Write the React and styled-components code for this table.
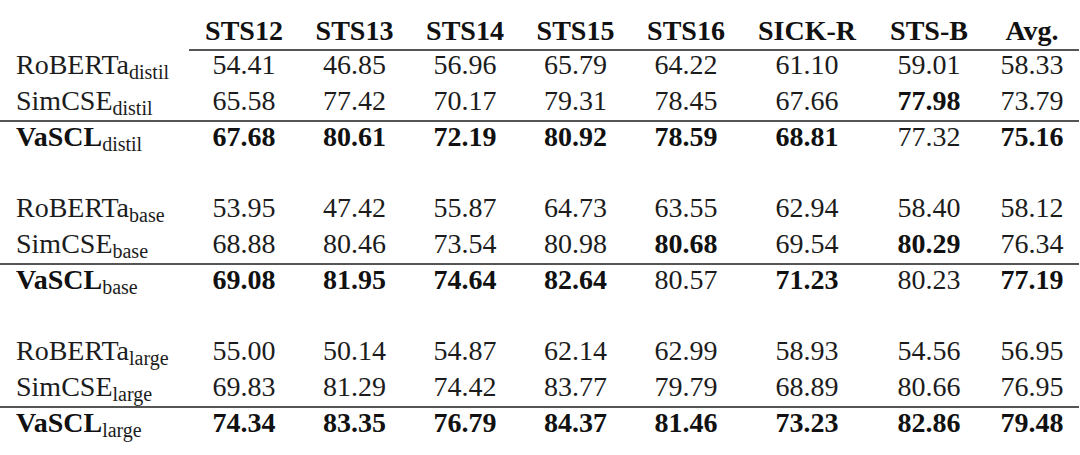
import React from 'react';
import styled, { createGlobalStyle } from 'styled-components';

const GlobalStyle = createGlobalStyle`
  html, body {
    margin: 0;
    padding: 0;
    background: #ffffff;
  }
`;

const columns = ['STS12', 'STS13', 'STS14', 'STS15', 'STS16', 'SICK-R', 'STS-B', 'Avg.'];
const widths = [189, 110, 111, 110, 111, 110, 132, 112, 94];

const groups = [
  {
    size: 'distil',
    rows: [
      { model: 'RoBERTa', values: ['54.41', '46.85', '56.96', '65.79', '64.22', '61.10', '59.01', '58.33'], bold: [] },
      { model: 'SimCSE', values: ['65.58', '77.42', '70.17', '79.31', '78.45', '67.66', '77.98', '73.79'], bold: [6] },
      { model: 'VaSCL', values: ['67.68', '80.61', '72.19', '80.92', '78.59', '68.81', '77.32', '75.16'], bold: [0, 1, 2, 3, 4, 5, 7], ours: true },
    ],
  },
  {
    size: 'base',
    rows: [
      { model: 'RoBERTa', values: ['53.95', '47.42', '55.87', '64.73', '63.55', '62.94', '58.40', '58.12'], bold: [] },
      { model: 'SimCSE', values: ['68.88', '80.46', '73.54', '80.98', '80.68', '69.54', '80.29', '76.34'], bold: [4, 6] },
      { model: 'VaSCL', values: ['69.08', '81.95', '74.64', '82.64', '80.57', '71.23', '80.23', '77.19'], bold: [0, 1, 2, 3, 5, 7], ours: true },
    ],
  },
  {
    size: 'large',
    rows: [
      { model: 'RoBERTa', values: ['55.00', '50.14', '54.87', '62.14', '62.99', '58.93', '54.56', '56.95'], bold: [] },
      { model: 'SimCSE', values: ['69.83', '81.29', '74.42', '83.77', '79.79', '68.89', '80.66', '76.95'], bold: [] },
      { model: 'VaSCL', values: ['74.34', '83.35', '76.79', '84.37', '81.46', '73.23', '82.86', '79.48'], bold: [0, 1, 2, 3, 4, 5, 6, 7], ours: true },
    ],
  },
];

const Table = styled.table`
  margin-top: 17px;
  width: 1079px;
  table-layout: fixed;
  border-collapse: separate;
  border-spacing: 0;
  font-family: "Liberation Serif", "Times New Roman", serif;
  font-size: 28px;
  line-height: 28px;
  color: #1c1c1c;
`;

const HeadCell = styled.th`
  padding: 0 0 4px;
  font-weight: 700;
  text-align: center;
  white-space: nowrap;
  color: #111111;
  border-bottom: 2px solid ${(p) => (p.$blank ? 'transparent' : '#555555')};
`;

const Cell = styled.td`
  padding: ${(p) => (p.$ruled ? '1px' : '0')} 0 ${(p) => (p.$beforeRule ? '5px' : '8px')};
  border-top: ${(p) => (p.$ruled ? '2px solid #555555' : 'none')};
  text-align: center;
  white-space: nowrap;
  font-weight: ${(p) => (p.$bold ? 700 : 400)};
  color: ${(p) => (p.$bold ? '#111111' : '#1c1c1c')};
`;

const LabelCell = styled(Cell)`
  padding-left: 16px;
  text-align: left;
`;

const Size = styled.sub`
  font-size: 20px;
  font-weight: 400;
  vertical-align: -5px;
  line-height: 0;
  color: #1c1c1c;
`;

const Gap = styled.td`
  height: 35px;
  padding: 0;
`;

const App = () => (
  <>
    <GlobalStyle />
    <Table>
      <colgroup>
        {widths.map((w, i) => (
          <col key={i} style={{ width: `${w}px` }} />
        ))}
      </colgroup>
      <thead>
        <tr>
          <HeadCell $blank />
          {columns.map((c) => (
            <HeadCell key={c}>{c}</HeadCell>
          ))}
        </tr>
      </thead>
      {groups.map((g, gi) => (
        <tbody key={g.size}>
          {gi > 0 && (
            <tr>
              <Gap colSpan={9} />
            </tr>
          )}
          {g.rows.map((r, ri) => {
            const ruled = !!r.ours;
            const beforeRule = ri === 1;
            return (
              <tr key={r.model}>
                <LabelCell $ruled={ruled} $beforeRule={beforeRule} $bold={r.ours}>
                  {r.model}
                  <Size>{g.size}</Size>
                </LabelCell>
                {r.values.map((v, vi) => (
                  <Cell key={vi} $ruled={ruled} $beforeRule={beforeRule} $bold={r.bold.includes(vi)}>
                    {v}
                  </Cell>
                ))}
              </tr>
            );
          })}
        </tbody>
      ))}
    </Table>
  </>
);

export default App;
